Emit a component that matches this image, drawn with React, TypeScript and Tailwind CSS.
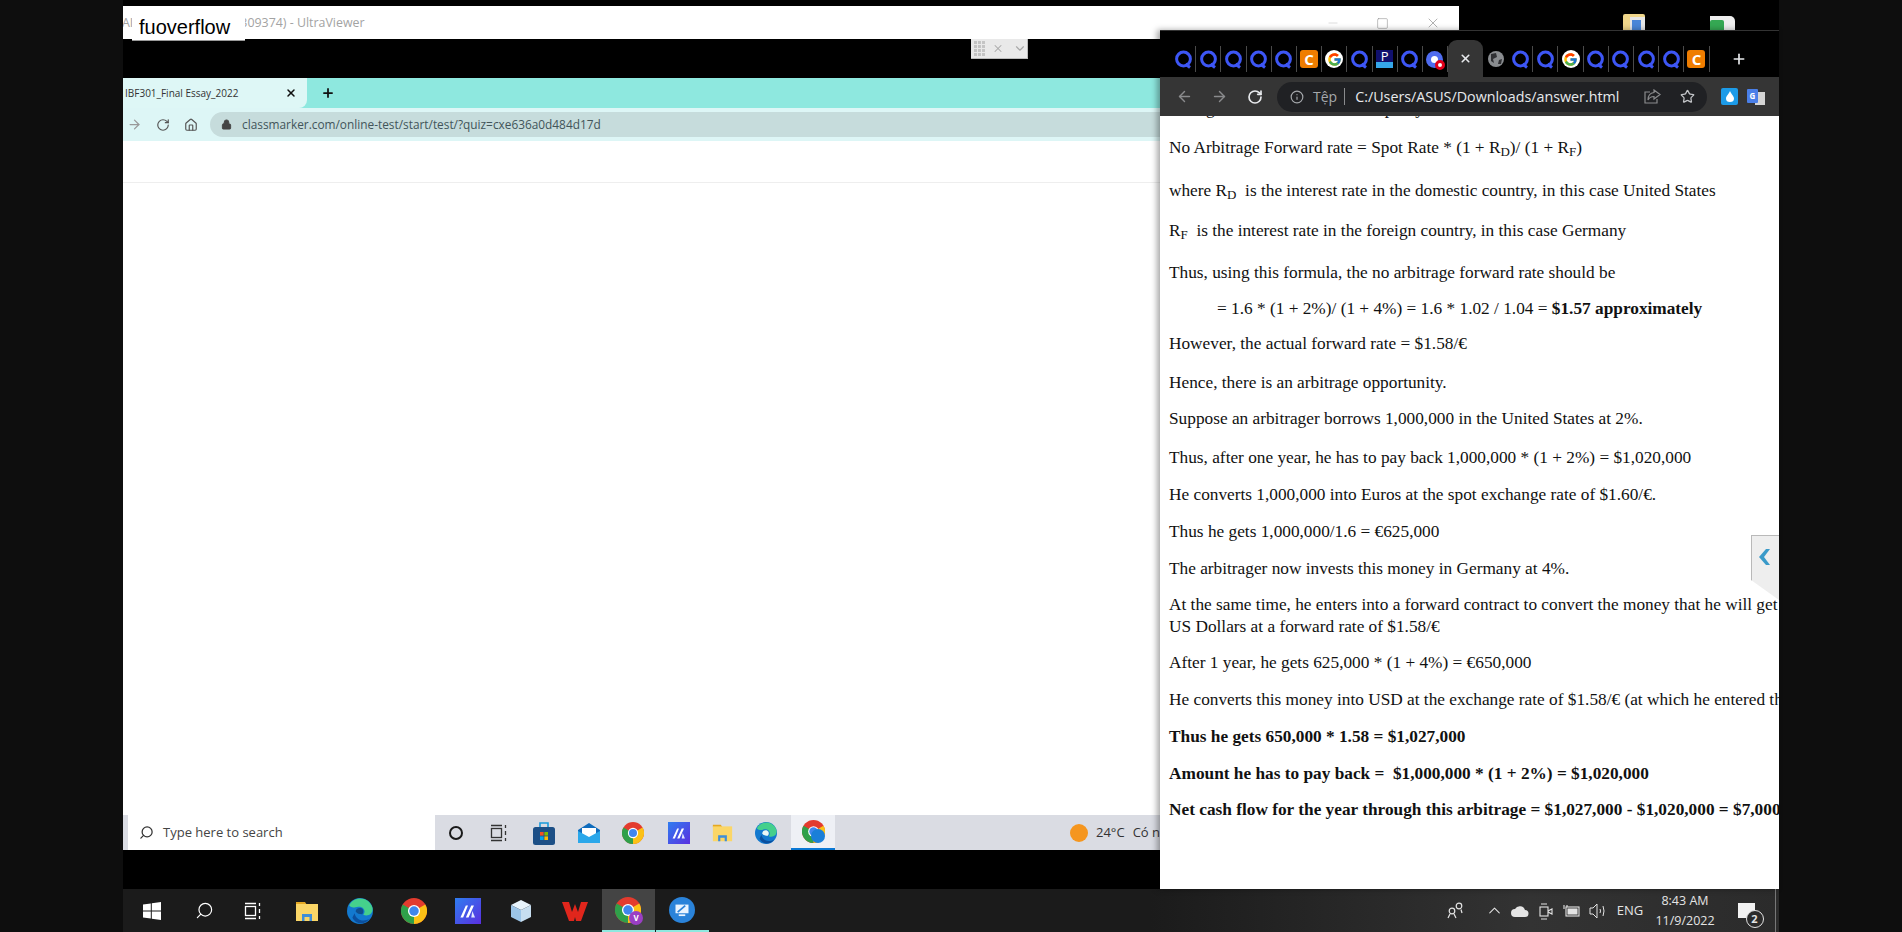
import { ArrowLeft, ArrowRight, RotateCw, Info, Star, Search, Home, Lock, X, Plus, ChevronDown, ChevronUp, Minus, Square } from "lucide-react";
import { FcGoogle } from "react-icons/fc";

const serif = { fontFamily: '"Liberation Serif", serif' };

function QuizletIcon() {
  return (
    <svg width="19" height="19" viewBox="0 0 19 19" fill="none">
      <circle cx="9.5" cy="9" r="6.9" stroke="#3d56f5" strokeWidth="3" />
      <path d="M11.5 14 L16 17.5" stroke="#3d56f5" strokeWidth="3" />
    </svg>
  );
}

function CIcon() {
  return (
    <div className="flex h-[18px] w-[18px] items-center justify-center rounded-[3px] bg-[#ef7d00] text-[15px] font-bold leading-none text-white">
      C
    </div>
  );
}

function GoogleIcon() {
  return (
    <div className="flex h-[18px] w-[18px] items-center justify-center rounded-full bg-white">
      <FcGoogle size={15} />
    </div>
  );
}

function ChromeIcon({ size = 24 }: { size?: number }) {
  return (
    <svg width={size} height={size} viewBox="0 0 24 24">
      <circle cx="12" cy="12" r="12" fill="#e33b2e" />
      <path d="M12 12 L1.6 6 A12 12 0 0 0 12 24 Z" fill="#2fa04a" />
      <path d="M12 12 L12 24 A12 12 0 0 0 22.4 6 Z" fill="#fbc116" />
      <circle cx="12" cy="12" r="5.6" fill="#fff" />
      <circle cx="12" cy="12" r="4.4" fill="#3f86ee" />
    </svg>
  );
}

function EdgeIcon({ size = 26, core = "#0f4f8f" }: { size?: number; core?: string }) {
  return (
    <svg width={size} height={size} viewBox="0 0 24 24">
      <circle cx="12" cy="12" r="12" fill="#1379cf" />
      <path d="M2 7 C6 -2 20 -2 23.5 9 C24.5 14 20 17.5 15 15.5 C18 12 15 7.5 10.5 8 C7 8.5 5 10 2 7 Z" fill="#45d08c" />
      <path d="M7 14 C8 20 15 23 21 19 C17 25 8 25 5 18 Z" fill="#0b4f9e" />
      <path d="M8 12.5 C8 9.5 11 8.5 13.5 9.5 C15.5 10.5 15.5 13.5 14 15 C11.5 15 9 14.5 8 12.5 Z" fill={core} />
    </svg>
  );
}

function FolderIcon({ size = 24 }: { size?: number }) {
  return (
    <svg width={size} height={size} viewBox="0 0 24 24">
      <path d="M1 3 H10 L12 6 H1 Z" fill="#e5a823" />
      <rect x="1" y="5" width="22" height="17" fill="#fbd667" />
      <path d="M7 15 H17 V22 H14.5 V18 H9.5 V22 H7 Z" fill="#3f8ed8" />
    </svg>
  );
}

function MaIcon({ size = 24, id }: { size?: number; id: string }) {
  return (
    <svg width={size} height={size} viewBox="0 0 24 24">
      <defs>
        <linearGradient id={id} x1="0" y1="0" x2="1" y2="1">
          <stop offset="0" stopColor="#2f7df0" />
          <stop offset="1" stopColor="#5a2fe0" />
        </linearGradient>
      </defs>
      <rect width="24" height="24" fill={`url(#${id})`} />
      <path d="M5 18 L10 7 H12 L7.5 18 Z M10 18 L15 7 H17.5 L12.5 18 Z" fill="#fff" />
      <path d="M16 12 L18.5 18 H15 Z" fill="#dfe6ff" />
    </svg>
  );
}

function CubeIcon() {
  return (
    <svg width="22" height="24" viewBox="0 0 22 24">
      <path d="M11 1 L21 6 L11 11 L1 6 Z" fill="#e8f3fb" />
      <path d="M1 6 L11 11 V23 L1 18 Z" fill="#9cc5e8" />
      <path d="M21 6 L11 11 V23 L21 18 Z" fill="#c7def0" />
    </svg>
  );
}

function WpsIcon() {
  return (
    <svg width="26" height="22" viewBox="0 0 26 22">
      <path d="M0 2 H7 L10 12 L13 4 L16 12 L19 2 H26 L19 21 H14 L13 17 L12 21 H7 Z" fill="#e0261c" />
    </svg>
  );
}

function RemoteIcon() {
  return (
    <svg width="26" height="26" viewBox="0 0 24 24">
      <circle cx="12" cy="12" r="12" fill="#2a83da" />
      <rect x="6" y="7" width="12" height="8" fill="#eaf4ff" />
      <path d="M8 14 L15 8" stroke="#2a83da" strokeWidth="1.6" />
      <rect x="9" y="16" width="6" height="1.6" fill="#eaf4ff" />
    </svg>
  );
}

function WindowsLogo() {
  return (
    <svg width="18" height="18" viewBox="0 0 18 18" fill="#fff">
      <path d="M0 2.6 L7.8 1.4 V8.5 H0 Z M8.8 1.2 L18 0 V8.5 H8.8 Z M0 9.5 H7.8 V16.6 L0 15.4 Z M8.8 9.5 H18 V18 L8.8 16.8 Z" />
    </svg>
  );
}

function TaskViewIcon({ color }: { color: string }) {
  return (
    <svg width="18" height="18" viewBox="0 0 18 18" fill="none" stroke={color} strokeWidth="1.3">
      <rect x="1.5" y="4.5" width="10" height="9" />
      <path d="M1 1.5 H12 M1 16.5 H12 M15.5 1 V4 M15.5 7 V11 M15.5 14 V17" />
    </svg>
  );
}

function StoreIcon() {
  return (
    <svg width="22" height="24" viewBox="0 0 22 24">
      <path d="M7 6 V2 H15 V6" fill="none" stroke="#1a9bdc" strokeWidth="1.6" />
      <rect x="0" y="6" width="22" height="18" rx="2.5" fill="#1c4f86" />
      <rect x="7" y="11" width="3.6" height="3.6" fill="#f25022" />
      <rect x="11.4" y="11" width="3.6" height="3.6" fill="#7fba00" />
      <rect x="7" y="15.4" width="3.6" height="3.6" fill="#00a4ef" />
      <rect x="11.4" y="15.4" width="3.6" height="3.6" fill="#ffb900" />
    </svg>
  );
}

function MailIcon() {
  return (
    <svg width="22" height="22" viewBox="0 0 22 22">
      <path d="M0 8 L11 1 L22 8 V21 H0 Z" fill="#0f6cbd" />
      <path d="M4 6 H18 V13 L11 16 L4 13 Z" fill="#fff" />
      <path d="M0 9 L11 15 L22 9 V21 H0 Z" fill="#2aa7ea" />
    </svg>
  );
}

function Tab({ children }: { children: React.ReactNode }) {
  return (
    <div className="flex h-[26px] w-[25.2px] items-center justify-center border-r border-[#4a4a4a]">
      {children}
    </div>
  );
}

function TaskCell({ children }: { children: React.ReactNode }) {
  return <div className="flex h-[43px] w-[53.6px] items-center justify-center">{children}</div>;
}

function TrayCell({ children }: { children: React.ReactNode }) {
  return <div className="flex h-[43px] w-[26px] items-center justify-center">{children}</div>;
}

const lines: { key: number; gap: string; node: React.ReactNode }[] = [
  { key: 1, gap: "mt-[17px]", node: <>No Arbitrage Forward rate = Spot Rate * (1 + R<sub>D</sub>)/ (1 + R<sub>F</sub>)</> },
  { key: 2, gap: "mt-[21px]", node: <>where R<sub>D</sub>&nbsp; is the interest rate in the domestic country, in this case United States</> },
  { key: 3, gap: "mt-[18px]", node: <>R<sub>F</sub>&nbsp; is the interest rate in the foreign country, in this case Germany</> },
  { key: 4, gap: "mt-[20px]", node: <>Thus, using this formula, the no arbitrage forward rate should be</> },
  { key: 5, gap: "mt-[14px] pl-[48px]", node: <>= 1.6 * (1 + 2%)/ (1 + 4%) = 1.6 * 1.02 / 1.04 = <b>$1.57 approximately</b></> },
  { key: 6, gap: "mt-[13px]", node: <>However, the actual forward rate = $1.58/€</> },
  { key: 7, gap: "mt-[17px]", node: <>Hence, there is an arbitrage opportunity.</> },
  { key: 8, gap: "mt-[14px]", node: <>Suppose an arbitrager borrows 1,000,000 in the United States at 2%.</> },
  { key: 9, gap: "mt-[17px]", node: <>Thus, after one year, he has to pay back 1,000,000 * (1 + 2%) = $1,020,000</> },
  { key: 10, gap: "mt-[15px]", node: <>He converts 1,000,000 into Euros at the spot exchange rate of $1.60/€.</> },
  { key: 11, gap: "mt-[15px]", node: <>Thus he gets 1,000,000/1.6 = €625,000</> },
  { key: 12, gap: "mt-[15px]", node: <>The arbitrager now invests this money in Germany at 4%.</> },
  { key: 13, gap: "mt-[14px]", node: <>At the same time, he enters into a forward contract to convert the money that he will get<br />US Dollars at a forward rate of $1.58/€</> },
  { key: 14, gap: "mt-[14px]", node: <>After 1 year, he gets 625,000 * (1 + 4%) = €650,000</> },
  { key: 15, gap: "mt-[15px]", node: <>He converts this money into USD at the exchange rate of $1.58/€ (at which he entered th</> },
  { key: 16, gap: "mt-[15px]", node: <b>Thus he gets 650,000 * 1.58 = $1,027,000</b> },
  { key: 17, gap: "mt-[15px]", node: <b>Amount he has to pay back =&nbsp; $1,000,000 * (1 + 2%) = $1,020,000</b> },
  { key: 18, gap: "mt-[14px]", node: <b>Net cash flow for the year through this arbitrage = $1,027,000 - $1,020,000 = $7,000</b> },
];

function ChromeWindow() {
  return (
    <div className="absolute bottom-[43px] left-[1037px] top-[30px] flex w-[619px] flex-col overflow-hidden bg-white shadow-[-3px_0_6px_rgba(0,0,0,0.35)]">
      <div className="flex h-[47px] items-end border-t border-[#333] bg-black pl-[11px] pb-[5px]">
        <Tab><QuizletIcon /></Tab>
        <Tab><QuizletIcon /></Tab>
        <Tab><QuizletIcon /></Tab>
        <Tab><QuizletIcon /></Tab>
        <Tab><QuizletIcon /></Tab>
        <Tab><CIcon /></Tab>
        <Tab><GoogleIcon /></Tab>
        <Tab><QuizletIcon /></Tab>
        <Tab>
          <div className="flex h-[18px] w-[17px] flex-col overflow-hidden">
            <div className="h-[12px] bg-[#10106e] text-center text-[13px] leading-[13px] text-white">P</div>
            <div className="h-[6px] bg-[#35a6ea]" />
          </div>
        </Tab>
        <Tab><QuizletIcon /></Tab>
        <Tab>
          <div className="relative h-[17px] w-[17px] rounded-full bg-[#4f6cf0]">
            <div className="absolute left-[5px] top-[5px] h-[7px] w-[7px] rounded-full bg-white" />
            <div className="absolute -bottom-[2px] -right-[2px] h-[10px] w-[10px] rounded-full border-[3px] border-[#e2001a] bg-white" />
          </div>
        </Tab>
        <div className="-mb-[5px] flex h-[37px] w-[35px] items-center justify-center rounded-t-[9px] bg-[#353535]">
          <X size={13} strokeWidth={3} className="text-[#e8eaed]" />
        </div>
        <div className="flex h-[26px] w-[25px] items-center justify-center">
          <svg width="16" height="16" viewBox="0 0 16 16">
            <circle cx="8" cy="8" r="8" fill="#8a8d90" />
            <path d="M3 3 L8 2 L9 6 L5 8 L6 12 L3 10 Z M11 9 L14 8 L13 13 L10 13 Z" fill="#303134" />
          </svg>
        </div>
        <Tab><QuizletIcon /></Tab>
        <Tab><QuizletIcon /></Tab>
        <Tab><GoogleIcon /></Tab>
        <Tab><QuizletIcon /></Tab>
        <Tab><QuizletIcon /></Tab>
        <Tab><QuizletIcon /></Tab>
        <Tab><QuizletIcon /></Tab>
        <Tab><CIcon /></Tab>
        <Plus size={16} strokeWidth={2.5} className="mb-[5px] ml-[21px] text-[#e8eaed]" />
      </div>

      <div className="flex h-[39px] items-center bg-[#353535] pl-[16px] text-[#8a8b8d]">
        <ArrowLeft size={17} />
        <ArrowRight size={17} className="ml-[18px]" />
        <RotateCw size={16} strokeWidth={2.5} className="ml-[19px] text-[#e8eaed]" />
        <div className="ml-[14px] flex h-[30px] w-[430px] items-center rounded-full bg-[#202124] pl-[13px]">
          <Info size={14} className="text-[#a5a8ac]" />
          <span className="ml-[9px] text-[14px] text-[#a5a8ac]">Tệp</span>
          <span className="ml-[7px] h-[17px] w-px bg-[#8a8b8d]" />
          <span className="ml-[10px] text-[14.3px] text-[#e8eaed]">C:/Users/ASUS/Downloads/answer.html</span>
          <svg className="ml-auto text-[#8a8b8d]" width="17" height="15" viewBox="0 0 17 15" fill="none" stroke="currentColor" strokeWidth="1.2">
            <path d="M6 3 H1 V14 H13 V10" />
            <path d="M10 1 L16 5.5 L10 10 V7.5 C7 7.5 5 9 4 11 C4 7 6 4 10 3.5 Z" />
          </svg>
          <Star size={15} className="ml-[19px] mr-[12px] text-[#c3c5c8]" />
        </div>
        <div className="ml-[14px] flex h-[17px] w-[17px] items-center justify-center rounded-[2px] bg-[#1c9be8]">
          <svg width="8" height="11" viewBox="0 0 8 11" fill="#fff"><path d="M4 0 C5 3 8 5 8 7.5 A4 3.5 0 0 1 0 7.5 C0 5 3 3 4 0 Z" /></svg>
        </div>
        <div className="relative ml-[9px] h-[16px] w-[18px]">
          <div className="absolute right-0 top-[3px] h-[13px] w-[10px] bg-[#d5d5d5]" />
          <div className="absolute left-0 top-0 flex h-[14px] w-[11px] items-center justify-center rounded-[1px] bg-[#4a7fe8] text-[8px] font-bold text-white">G</div>
        </div>
      </div>

      <div className="relative flex-1 overflow-hidden whitespace-nowrap pl-[9px] text-[17.3px] leading-[22px] text-[#111]" style={serif}>
        <p className="-mt-[18px] h-[22px]">
          <span className="ml-[37px]">g</span>
          <span className="ml-[170px]">p</span>
          <span className="ml-[22px]">y</span>
        </p>
        {lines.map((l) => (
          <p key={l.key} className={l.gap}>{l.node}</p>
        ))}
        <div className="absolute left-[591px] top-[419px] h-[65px] w-[28px] border-l border-t border-[#b9b9b9] bg-[#eeeeee] [clip-path:polygon(0_0,100%_0,100%_100%,0_45px)]">
          <svg className="ml-[5px] mt-[12px]" width="14" height="18" viewBox="0 0 14 18" fill="#3a9ac9"><path d="M9 1 H13 L7 9 L13 17 H9 L2 9 Z" /></svg>
        </div>
      </div>
    </div>
  );
}

function InnerTaskbar() {
  return (
    <div className="flex h-[35px] items-center bg-[#dadce3]">
      <div className="ml-[5px] flex h-[35px] w-[307px] items-center bg-white pl-[11px]">
        <Search size={15} className="scale-x-[-1] text-[#333]" />
        <span className="ml-[9px] text-[13px] text-[#444]">Type here to search</span>
      </div>
      <div className="ml-[14px] h-[14px] w-[14px] rounded-full border-[2.5px] border-[#1a1a1a]" />
      <div className="ml-[27px]"><TaskViewIcon color="#333" /></div>
      <div className="ml-[25px]"><StoreIcon /></div>
      <div className="ml-[23px]"><MailIcon /></div>
      <div className="ml-[22px]"><ChromeIcon size={22} /></div>
      <div className="ml-[24px]"><MaIcon size={22} id="ma-inner" /></div>
      <div className="ml-[22px]"><FolderIcon size={21} /></div>
      <div className="ml-[22px]"><EdgeIcon size={22} core="#eaf7f5" /></div>
      <div className="ml-[14px] flex h-[35px] w-[44px] items-center justify-center border-b-[2px] border-[#0a78d4] bg-[#eef0f5]">
        <div className="relative h-[23px] w-[23px]">
          <ChromeIcon size={23} />
          <div className="absolute bottom-0 right-0 h-[14px] w-[14px] rounded-full bg-[#1a7fd8]" />
        </div>
      </div>
      <div className="ml-[235px] h-[18px] w-[18px] rounded-full bg-[#f5961f]" />
      <span className="ml-[8px] text-[13px] text-[#333]">24°C</span>
      <span className="ml-[8px] text-[13px] text-[#333]">Có n</span>
    </div>
  );
}

function OuterTaskbar() {
  return (
    <div className="flex h-[43px] items-center bg-[linear-gradient(to_right,#1b1b1b_62%,#333333_85%,#2b2b2b)] text-[#e4e4e4]">
      <div className="ml-[2px] flex w-[53px] justify-center"><WindowsLogo /></div>
      <div className="flex w-[53px] justify-center"><Search size={19} strokeWidth={1.5} className="scale-x-[-1] text-white" /></div>
      <div className="flex w-[44px] justify-center"><TaskViewIcon color="#fff" /></div>
      <div className="ml-[5px] flex">
        <TaskCell><FolderIcon /></TaskCell>
        <TaskCell><EdgeIcon /></TaskCell>
        <TaskCell><ChromeIcon size={26} /></TaskCell>
        <TaskCell><MaIcon size={26} id="ma-outer" /></TaskCell>
        <TaskCell><CubeIcon /></TaskCell>
        <TaskCell><WpsIcon /></TaskCell>
      </div>
      <div className="flex h-[43px] w-[53px] items-center justify-center border-b-[2px] border-[#8ee8df] bg-[#444444]">
        <div className="relative h-[26px] w-[26px]">
          <ChromeIcon size={26} />
          <div className="absolute -bottom-[2px] -right-[2px] flex h-[14px] w-[14px] items-center justify-center rounded-full bg-[#9a3fc4] text-[8px] font-bold text-white">V</div>
        </div>
      </div>
      <div className="ml-[1px] flex h-[43px] w-[53px] items-center justify-center border-b-[2px] border-[#8ee8df]">
        <RemoteIcon />
      </div>
      <div className="ml-auto mr-[12px]">
        <TrayCell>
          <svg width="18" height="18" viewBox="0 0 18 18" fill="none" stroke="#e4e4e4" strokeWidth="1.2">
            <circle cx="5" cy="9" r="2.8" /><path d="M1 16 L3 12 M9 16 L7 12" />
            <circle cx="12" cy="4" r="2.8" /><path d="M15 11 L14 7.5" />
          </svg>
        </TrayCell>
      </div>
      <TrayCell><ChevronUp size={19} strokeWidth={1.3} /></TrayCell>
      <TrayCell>
        <svg width="18" height="12" viewBox="0 0 18 12" fill="#e4e4e4"><path d="M4 12 A4 4 0 0 1 4 4 A5.5 5.5 0 0 1 14 5 A3.5 3.5 0 0 1 14 12 Z" /></svg>
      </TrayCell>
      <TrayCell>
        <svg width="14" height="18" viewBox="0 0 14 18" fill="none" stroke="#e4e4e4" strokeWidth="1.1">
          <rect x="1" y="5" width="8" height="9" /><path d="M9 9 L13 7 V12 L9 10 M2 2 H8 M2 17 H8" />
        </svg>
      </TrayCell>
      <TrayCell>
        <svg width="18" height="14" viewBox="0 0 18 14" fill="none" stroke="#e4e4e4" strokeWidth="1.1">
          <rect x="3" y="3" width="13" height="9" /><rect x="5" y="5" width="9" height="5" fill="#e4e4e4" /><path d="M1 1 V5 M4 1 V3" />
        </svg>
      </TrayCell>
      <TrayCell>
        <svg width="18" height="16" viewBox="0 0 18 16" fill="none" stroke="#e4e4e4" strokeWidth="1">
          <path d="M1 5 H4 L8 1 V15 L4 11 H1 Z M11 6 Q12 8 11 10 M14 3 Q16 8 14 13" />
        </svg>
      </TrayCell>
      <div className="flex w-[38px] justify-center text-[13px]">ENG</div>
      <div className="flex w-[72px] flex-col items-center text-[12.5px] leading-[20px]">
        <span>8:43 AM</span>
        <span>11/9/2022</span>
      </div>
      <div className="flex w-[50px] justify-center">
        <div className="relative h-[15px] w-[17px] bg-[#f2f2f2]">
          <div className="absolute -bottom-[10px] -right-[9px] flex h-[18px] w-[18px] items-center justify-center rounded-full border border-[#e4e4e4] bg-[#2b2b2b] text-[11px] font-bold">2</div>
        </div>
      </div>
      <div className="ml-[4px] h-[43px] w-px bg-[#777]" />
      <div className="w-[3px]" />
    </div>
  );
}

export default function App() {
  return (
    <div className="flex h-[932px] w-[1902px] overflow-hidden bg-[#0e0e0e]" style={{ fontFamily: '"Open Sans", sans-serif' }}>
      <div className="w-[123px]" />
      <div className="relative flex w-[1656px] flex-col bg-black">
        <div className="mt-[6px] flex h-[33px] w-[1336px] items-center overflow-hidden bg-white pt-[1px] text-[12.4px] text-[#a3a3a3]">
          <span className="-ml-[1px]">AI</span>
          <span className="ml-[107px]">309374) - UltraViewer</span>
          <Minus size={14} strokeWidth={1} className="ml-auto text-[#c4c4c4]" />
          <Square size={13} strokeWidth={1} className="ml-[36px] text-[#8a8a8a]" />
          <X size={16} strokeWidth={1} className="ml-[36px] mr-[18px] text-[#8a8a8a]" />
        </div>
        <div className="h-[39px]">
          <div className="ml-[848px] flex h-[20px] w-[57px] items-center gap-[7px] border-b border-r border-[#bbb] bg-[#e9e9e9] pl-[3px] text-[#a8a8a8]">
            <div className="grid h-[15px] w-[12px] grid-cols-3 gap-px">
              {Array.from({ length: 12 }).map((_, i) => (
                <div key={i} className="bg-[#c4c4c4]" />
              ))}
            </div>
            <X size={13} strokeWidth={2} />
            <ChevronDown size={15} strokeWidth={2} className="ml-[2px]" />
          </div>
        </div>
        <div className="flex h-[30px] items-center bg-[#8ee8df]">
          <div className="flex h-[30px] w-[184px] items-center rounded-br-[8px] bg-[#def7f6] pl-[2px] text-[10px] text-[#333]">
            <span>IBF301_Final Essay_2022</span>
            <X size={12} strokeWidth={3} className="ml-auto mr-[10px] text-[#111]" />
          </div>
          <Plus size={14} strokeWidth={3} className="ml-[14px] text-[#111]" />
        </div>
        <div className="flex h-[33px] items-center bg-[#ddf6f6] text-[#555]">
          <ArrowRight size={15} className="ml-[4px] text-[#999]" />
          <RotateCw size={14} className="ml-[14px]" />
          <Home size={14} className="ml-[14px]" />
          <div className="ml-[12px] flex h-[25px] flex-1 items-center rounded-l-full bg-[#c6dcdc] pl-[11px]">
            <Lock size={11} fill="#444" className="text-[#444]" />
            <span className="ml-[10px] text-[11.85px] text-[#42555a]">classmarker.com/online-test/start/test/?quiz=cxe636a0d484d17d</span>
          </div>
        </div>
        <div className="h-[42px] border-b border-[#eeeeee] bg-white" />
        <div className="h-[632px] bg-white" />
        <InnerTaskbar />
        <div className="h-[39px]" />
        <OuterTaskbar />

        <div className="absolute left-[9px] top-[14px] h-[27px] w-[113px] border-b border-[#999] bg-white pl-[7px] text-[20px] leading-[26px] text-black" style={{ fontFamily: '"Liberation Sans", sans-serif' }}>
          fuoverflow
        </div>
        <div className="absolute left-[1500px] top-[14px] h-[16px] w-[22px] rounded-t-[2px] bg-[#f0d68a]">
          <div className="absolute bottom-0 right-0 h-[13px] w-[15px] bg-[#e6e6e6]" />
          <div className="absolute bottom-0 right-[4px] h-[10px] w-[9px] bg-[#4a86d8]" />
        </div>
        <div className="absolute left-[1587px] top-[16px] h-[14px] w-[25px] rounded-tr-[5px] bg-[#eeeeee]">
          <div className="absolute bottom-0 left-0 h-[10px] w-[14px] rounded-t-[2px] bg-[#35a853]" />
        </div>
        <ChromeWindow />
      </div>
      <div className="w-[123px]" />
    </div>
  );
}
